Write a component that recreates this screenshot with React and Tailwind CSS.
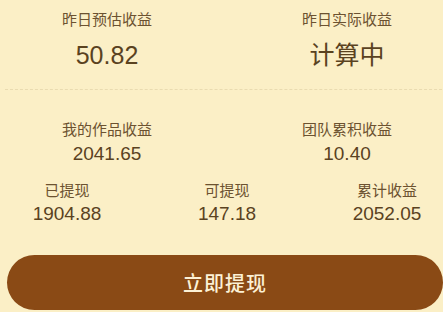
import React from "react";

const font = { fontFamily: '"Liberation Sans", "Noto Sans CJK SC", sans-serif' };

function Stat({ label, value, valueClass }) {
  return (
    <div className="flex flex-col items-center">
      <div className="text-[15px] leading-[20px] text-[#6c5230]">{label}</div>
      <div className={valueClass}>{value}</div>
    </div>
  );
}

export default function App() {
  const top = [
    { label: "昨日预估收益", value: "50.82" },
    { label: "昨日实际收益", value: "计算中" },
  ];
  const mid = [
    { label: "我的作品收益", value: "2041.65" },
    { label: "团队累积收益", value: "10.40" },
  ];
  const bottom = [
    { label: "已提现", value: "1904.88" },
    { label: "可提现", value: "147.18" },
    { label: "累计收益", value: "2052.05" },
  ];

  return (
    <div className="w-[443px] h-[312px] overflow-hidden bg-[#fbefc6]" style={font}>
      <div className="w-[480px] ml-[-13px] pt-[10px]">
        <div className="grid grid-cols-2">
          {top.map((s, i) => (
            <Stat
              key={i}
              label={s.label}
              value={s.value}
              valueClass="mt-[10px] text-[25px] leading-[30px] text-[#5a421f]"
            />
          ))}
        </div>
        <div className="mt-[19px] ml-[18px] border-t border-dashed border-[#e9dbb0]" />
        <div className="grid grid-cols-2 mt-[30px]">
          {mid.map((s, i) => (
            <Stat
              key={i}
              label={s.label}
              value={s.value}
              valueClass="mt-[2px] text-[19px] leading-[24px] text-[#5a421f]"
            />
          ))}
        </div>
        <div className="grid grid-cols-3 mt-[15px]">
          {bottom.map((s, i) => (
            <Stat
              key={i}
              label={s.label}
              value={s.value}
              valueClass="mt-[1px] text-[19px] leading-[24px] text-[#5a421f]"
            />
          ))}
        </div>
        <button className="mt-[29px] ml-[20px] w-[436px] h-[55px] rounded-full bg-[#8a4a15] text-[#fcf1d6] text-[20px] font-medium tracking-[1px] flex items-center justify-center pt-[2px]">
          立即提现
        </button>
      </div>
    </div>
  );
}
